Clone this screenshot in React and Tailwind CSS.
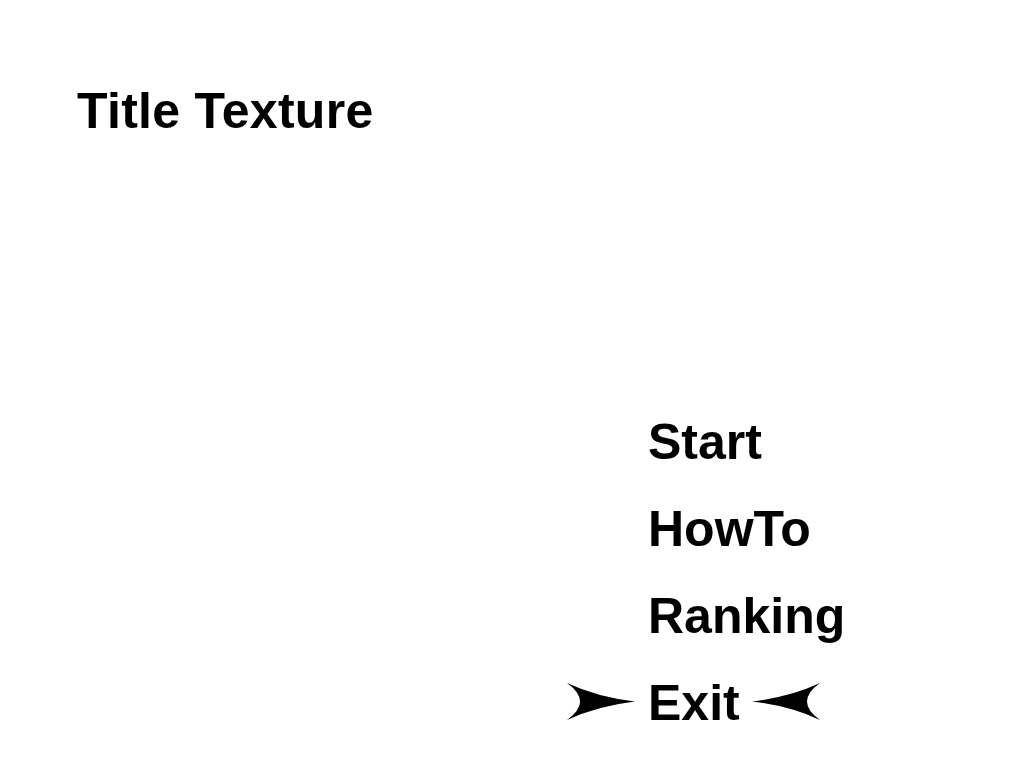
import React from 'react';

const Arrow = ({ flip }) => (
  <svg width="68" height="37" viewBox="0 0 68 37" className={flip ? 'absolute left-[104px] top-[23px] -scale-x-100' : 'absolute left-[-81px] top-[23px]'}>
    <path d="M0 0 Q30 14 68 18.5 Q30 23 0 37 Q26 18.5 0 0 Z" fill="#000" />
  </svg>
);

const items = ['Start', 'HowTo', 'Ranking', 'Exit'];

export default function App() {
  const selected = 'Exit';
  return (
    <div className="w-[1024px] h-[768px] bg-white text-black font-bold text-[50px] overflow-hidden" style={{ fontFamily: '"Liberation Sans", Arial, sans-serif' }}>
      <h1 className="pl-[77px] pt-[86px] leading-[50px] font-bold tracking-[0.3px]">Title Texture</h1>
      <ul className="mt-[263px] pl-[648px] flex flex-col">
        {items.map(item => (
          <li key={item} className="relative leading-[87px] h-[87px]">
            {item === selected && <Arrow />}
            {item}
            {item === selected && <Arrow flip />}
          </li>
        ))}
      </ul>
    </div>
  );
}
